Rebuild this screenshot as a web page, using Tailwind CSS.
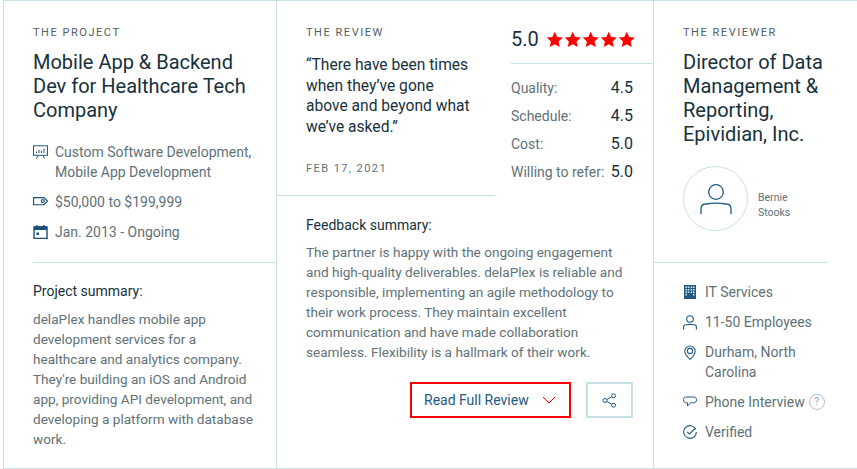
<!DOCTYPE html>
<html lang="en">
<head>
<meta charset="UTF-8">
<title>Review</title>
<script src="https://cdn.jsdelivr.net/npm/@tailwindcss/browser@4"></script>
</head>
<body class="bg-white font-['Roboto',sans-serif] overflow-hidden">
<div class="flex w-[857px] h-[469px] pl-[3px] overflow-hidden">
  <div class="flex w-[854px] h-[469px] border-t border-b border-l border-[#c9e0e7]">

    <!-- project -->
    <section class="w-[273px] shrink-0 border-r border-[#c9e0e7]">
      <div class="ml-[29px] pr-5 pt-[25px] h-[262px] border-b border-[#c9e0e7]">
        <h3 class="text-[11px] leading-[14px] tracking-[0.14em] text-[#4f6068]">THE PROJECT</h3>
        <h2 class="mt-[10px] text-[20px] leading-[24px] text-[#17313b]">Mobile App &amp; Backend Dev for Healthcare Tech Company</h2>
        <ul class="mt-[20px] text-[14px] leading-[20px] text-[#617177]">
          <li class="flex gap-[7px]">
            <svg class="w-[15px] h-[14px] mt-[3px] shrink-0" viewBox="0 0 15 14" fill="none" stroke="#1f5a85" stroke-width="1"><rect x="0.5" y="0.8" width="14" height="9.5"/><path d="M3.500 8V6.500M6 8V5M8.500 8V6M11 8V3.500M5 10.500 3.500 13.500M10 10.500l1.500 3"/></svg>
            <span>Custom Software Development, Mobile App Development</span>
          </li>
          <li class="flex gap-[7px] mt-[10px]">
            <svg class="w-[15px] h-[14px] mt-[3px] shrink-0" viewBox="0 0 15 14" fill="none" stroke="#174f78" stroke-width="1.100"><path d="M.6 2.600h10.400l3.400 3.400-3.400 3.700H.6z"/><circle cx="9.800" cy="6.100" r="1.500"/></svg>
            <span>$50,000 to $199,999</span>
          </li>
          <li class="flex gap-[7px] mt-[10px]">
            <svg class="w-[15px] h-[14px] mt-[3px] shrink-0" viewBox="0 0 15 14" fill="none"><path d="M1 2h13v11.500H1z" stroke="#174f78" stroke-width="1.400"/><path d="M1 1.500h13v3.500H1z" fill="#174f78"/><path d="M4 0v2M11 0v2" stroke="#174f78" stroke-width="1.400"/><rect x="3.500" y="7.500" width="2.500" height="2.500" fill="#174f78"/></svg>
            <span>Jan. 2013 - Ongoing</span>
          </li>
        </ul>
      </div>
      <div class="pl-[29px] pr-4 pt-[19px]">
        <h4 class="text-[14px] leading-[18px] text-[#17313b]">Project summary:</h4>
        <p class="mt-[9px] text-[13.600px] leading-[20px] text-[#617177]">delaPlex handles mobile app development services for a healthcare and analytics company. They're building an iOS and Android app, providing API development, and developing a platform with database work.</p>
      </div>
    </section>

    <!-- review -->
    <section class="w-[377px] shrink-0 border-r border-[#c9e0e7]">
      <div class="flex h-[195px]">
        <div class="w-[218px] h-[195px] border-b border-[#c9e0e7] pl-[29px] pt-[25px]">
          <h3 class="text-[11px] leading-[14px] tracking-[0.14em] text-[#4f6068]">THE REVIEW</h3>
          <p class="mt-[15px] w-[170px] text-[15.600px] leading-[20.500px] text-[#17313b]">“There have been times when they’ve gone above and beyond what we’ve asked.”</p>
          <p class="mt-[25px] text-[11px] leading-[14px] tracking-[0.13em] text-[#617177]">FEB 17, 2021</p>
        </div>
        <div class="flex-1 pl-[16px]">
          <div class="flex items-center h-[63px] pt-[14px] border-b border-[#c9e0e7]">
            <span class="text-[20px] text-[#17313b]">5.0</span>
            <span class="flex ml-[7px] gap-[0.500px]">
              <svg class="w-[17.500px] h-[17px]" viewBox="0 0 24 24" fill="#ff0000"><path d="M12 1l3.400 7.400 8 .900-6 5.400 1.700 8L12 18.600 4.900 22.700l1.700-8-6-5.400 8-.900z"/></svg>
              <svg class="w-[17.500px] h-[17px]" viewBox="0 0 24 24" fill="#ff0000"><path d="M12 1l3.400 7.400 8 .900-6 5.400 1.700 8L12 18.600 4.900 22.700l1.700-8-6-5.400 8-.900z"/></svg>
              <svg class="w-[17.500px] h-[17px]" viewBox="0 0 24 24" fill="#ff0000"><path d="M12 1l3.400 7.400 8 .900-6 5.400 1.700 8L12 18.600 4.900 22.700l1.700-8-6-5.400 8-.900z"/></svg>
              <svg class="w-[17.500px] h-[17px]" viewBox="0 0 24 24" fill="#ff0000"><path d="M12 1l3.400 7.400 8 .900-6 5.400 1.700 8L12 18.600 4.900 22.700l1.700-8-6-5.400 8-.900z"/></svg>
              <svg class="w-[17.500px] h-[17px]" viewBox="0 0 24 24" fill="#ff0000"><path d="M12 1l3.400 7.400 8 .900-6 5.400 1.700 8L12 18.600 4.900 22.700l1.700-8-6-5.400 8-.900z"/></svg>
            </span>
          </div>
          <dl class="mt-[10px] w-[122px] text-[14px] leading-[28px]">
            <div class="flex justify-between"><dt class="text-[#617177]">Quality:</dt><dd class="text-[16px] text-[#17313b]">4.5</dd></div>
            <div class="flex justify-between"><dt class="text-[#617177]">Schedule:</dt><dd class="text-[16px] text-[#17313b]">4.5</dd></div>
            <div class="flex justify-between"><dt class="text-[#617177]">Cost:</dt><dd class="text-[16px] text-[#17313b]">5.0</dd></div>
            <div class="flex justify-between"><dt class="text-[#617177]">Willing to refer:</dt><dd class="text-[16px] text-[#17313b]">5.0</dd></div>
          </dl>
        </div>
      </div>
      <div class="pl-[29px] pr-[20px] pt-[20px]">
        <h4 class="text-[14px] leading-[18px] text-[#17313b]">Feedback summary:</h4>
        <p class="mt-[8px] w-[328px] text-[13.600px] leading-[20px] text-[#617177]">The partner is happy with the ongoing engagement and high-quality deliverables. delaPlex is reliable and responsible, implementing an agile methodology to their work process. They maintain excellent communication and have made collaboration seamless. Flexibility is a hallmark of their work.</p>
        <div class="flex justify-end gap-[15px] mt-[20px] w-[327px]">
          <button class="flex items-center justify-between w-[161px] h-[36px] pl-[12px] pr-[13px] border-2 border-[#ff0000] text-[14px] text-[#1f5a85]">
            Read Full Review
            <svg class="w-[14px] h-[8px]" viewBox="0 0 14 8" fill="none" stroke="#ff0000" stroke-width="1"><path d="M1 1l6 6 6-6"/></svg>
          </button>
          <button class="flex items-center justify-center w-[47px] h-[36px] border-2 border-[#c9e0e7]">
            <svg class="w-[15px] h-[15px]" viewBox="0 0 15 15" fill="none" stroke="#1f5a85" stroke-width="1"><circle cx="11.500" cy="2.800" r="2"/><circle cx="3" cy="7.500" r="2"/><circle cx="11.500" cy="12.200" r="2"/><path d="M4.800 6.500 9.700 3.800M4.800 8.500l4.900 2.700"/></svg>
          </button>
        </div>
      </div>
    </section>

    <!-- reviewer -->
    <section class="w-[174px] shrink-0">
      <div class="h-[262px] border-b border-[#c9e0e7] pl-[29px] pt-[25px]">
        <h3 class="text-[11px] leading-[14px] tracking-[0.14em] text-[#4f6068]">THE REVIEWER</h3>
        <h2 class="mt-[10px] text-[20px] leading-[24px] text-[#17313b]">Director of Data Management &amp; Reporting, Epividian, Inc.</h2>
        <div class="flex items-center gap-[10px] mt-[20px]">
          <div class="flex items-center justify-center w-[65px] h-[65px] rounded-full border border-[#c9e0e7]">
            <svg class="w-[32px] h-[32px]" viewBox="0 0 32 32" fill="none" stroke="#1f5a85" stroke-width="1.300"><circle cx="16" cy="9" r="7.300"/><path d="M1 31v-5c0-3 2-5 5-5 6-1 14-1 20 0 3 0 5 2 5 5v5"/></svg>
          </div>
          <p class="mt-[13px] text-[10.500px] leading-[15px] text-[#617177]">Bernie<br>Stooks</p>
        </div>
      </div>
      <ul class="pl-[29px] pt-[19px] text-[14px] leading-[20px] text-[#617177]">
        <li class="flex gap-[8px]">
          <svg class="w-[14px] h-[14px] mt-[3px] shrink-0" viewBox="0 0 14 14"><path fill="#1f5a85" d="M1 0h12v14H1z"/><path fill="#dbe7ee" d="M2.500 1.500h1.500V3H2.500zM4.800 1.500h1.500V3H4.800zM7.700 1.500h1.500V3H7.700zM10 1.500h1.500V3H10zM2.500 4h1.500v1.500H2.500zM4.800 4h1.500v1.500H4.800zM7.700 4h1.500v1.500H7.700zM10 4h1.500v1.500H10zM2.500 6.500h1.500V8H2.500zM4.800 6.500h1.500V8H4.800zM7.700 6.500h1.500V8H7.700zM10 6.500h1.500V8H10zM2.500 9h1.500v1.500H2.500zM10 9h1.500v1.500H10z"/></svg>
          <span>IT Services</span>
        </li>
        <li class="flex gap-[8px] mt-[10px]">
          <svg class="w-[14px] h-[15px] mt-[3px] shrink-0" viewBox="0 0 14 15" fill="none" stroke="#1f5a85" stroke-width="1.100"><circle cx="7" cy="4" r="3.300"/><path d="M.6 14.500V12c0-1.300.9-2.200 2.200-2.300 2.800-.4 5.600-.4 8.400 0 1.300.1 2.200 1 2.200 2.300v2.500"/></svg>
          <span>11-50 Employees</span>
        </li>
        <li class="flex gap-[8px] mt-[10px]">
          <svg class="w-[14px] h-[15px] mt-[3px] shrink-0" viewBox="0 0 14 15" fill="none" stroke="#1f5a85" stroke-width="1.100"><path d="M7 14.300C4 11.500 1.800 8.800 1.800 6.200a5.200 5.200 0 0 1 10.400 0c0 2.600-2.200 5.300-5.200 8.100z"/><circle cx="7" cy="6" r="2.600"/></svg>
          <span class="w-[120px]">Durham, North Carolina</span>
        </li>
        <li class="flex gap-[8px] mt-[10px]">
          <svg class="w-[14px] h-[13px] mt-[4px] shrink-0" viewBox="0 0 14 13" fill="none" stroke="#1f5a85" stroke-width="1"><path d="M3.500 1h7C12.500 1 13.500 2 13.500 3.800S12.500 6.800 10.500 6.800H7.500L4.500 10V6.800h-1C1.500 6.800.5 5.600.5 3.800S1.500 1 3.500 1z"/></svg>
          <span class="flex items-center gap-[4px]">Phone Interview
            <span class="flex items-center justify-center w-[16px] h-[16px] rounded-full border border-[#b4bec2] text-[10px] leading-none text-[#9aa6ab]">?</span>
          </span>
        </li>
        <li class="flex gap-[8px] mt-[10px]">
          <svg class="w-[14px] h-[14px] mt-[3px] shrink-0" viewBox="0 0 14 14" fill="none" stroke="#1f5a85" stroke-width="1.100"><path d="M12.700 4.300A6.300 6.300 0 1 0 13.300 7"/><path d="M4.200 6.800 6.500 9l6-6"/></svg>
          <span>Verified</span>
        </li>
      </ul>
    </section>
  </div>
</div>
</body>
</html>
